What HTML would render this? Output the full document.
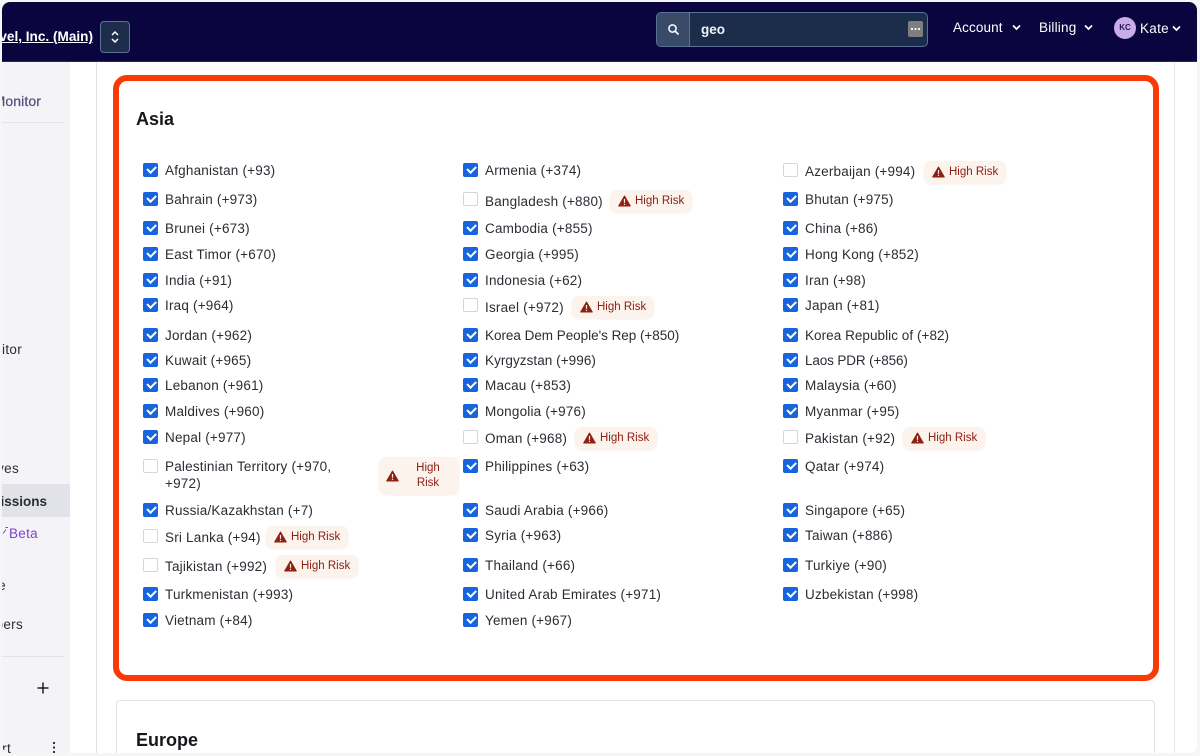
<!DOCTYPE html>
<html lang="en"><head><meta charset="utf-8"><title>Permissions</title>
<style>
html,body{margin:0;padding:0;width:1200px;height:756px;overflow:hidden;background:#f6f6f6;font-family:"Liberation Sans",sans-serif}
#w{position:absolute;left:2px;top:2px;width:1195px;height:751px;background:#fff;border-radius:8px;overflow:hidden}
#p{position:absolute;left:-2px;top:-2px;width:1200px;height:756px}
#p>*{position:absolute}
.t{font-size:13.5px;line-height:18px;letter-spacing:.2px;color:#2c2c34;white-space:nowrap;margin-top:1px}
.c,.u{width:14.5px;height:14.5px;box-sizing:border-box;border-radius:2px;background:#1764dc;margin-top:.7px}
.c::after{content:"";position:absolute;left:3.5px;top:3px;width:6.5px;height:3.5px;border-left:2px solid #fff;border-bottom:2px solid #fff;transform:rotate(-45deg)}
.u{background:#fff;border:1px solid #d6d6da}
.b{width:82px;height:22px;background:#fdf3ed;border-radius:7px;box-shadow:0 1px 2px #f6ece6;color:#8e2014;font-size:11.5px;line-height:22px;letter-spacing:0;white-space:nowrap}
.b svg{position:absolute;left:8px;top:5px}
.b span{position:absolute;left:25px;top:0}
.s{font-size:13.5px;line-height:18px;letter-spacing:.3px;white-space:nowrap;text-align:right;color:#2c2c34}
</style></head><body>
<svg width="0" height="0" style="position:absolute"><defs><g id="w1"><path d="M6.500 1L12.300 11H.7z" fill="#8e2014" stroke="#8e2014" stroke-linejoin="round"/><path d="M6.500 4v3.800M6.500 8.800v1.200" stroke="#fdf3ed" stroke-width="1.200"/></g></defs></svg>
<div id="w"><div id="p">
<div style="left:2px;top:62px;width:68px;height:694px;background:#f4f4f8"></div>
<div style="left:96px;top:62px;width:1px;height:694px;background:#e2e2e5"></div>
<div style="left:1174px;top:62px;width:1px;height:694px;background:#e6e6e8"></div>
<div style="left:2px;top:122px;width:62px;height:1px;background:#e2e2e7"></div>
<div style="left:2px;top:656px;width:62px;height:1px;background:#e2e2e7"></div>
<div style="left:2px;top:484px;width:68px;height:33px;background:#e2e3e8"></div>
<div class="s" style="left:0;top:92px;width:41px;overflow:hidden;color:#52527a;direction:rtl;font-size:14px;letter-spacing:.1px;-webkit-text-stroke:.25px #52527a"><bdi>Monitor</bdi></div>
<div class="s" style="left:0;top:341px;width:22px;overflow:hidden;direction:rtl"><bdi>Monitor</bdi></div>
<div class="s" style="left:0;top:460px;width:19px;overflow:hidden;direction:rtl"><bdi>Archives</bdi></div>
<div class="s" style="left:0;top:493px;width:47px;overflow:hidden;font-weight:700;direction:rtl;letter-spacing:0"><bdi>Permissions</bdi></div>
<div class="s" style="left:9px;top:525px;color:#7b45c9">Beta</div>
<svg style="left:2px;top:526px" width="7" height="9" viewBox="0 0 7 9"><path d="M1 7.500L4 3.500M3.500 1.500L6 1.500" stroke="#7b45c9" stroke-width="1"/></svg>
<div class="s" style="left:0;top:577px;width:6px;overflow:hidden;direction:rtl"><bdi>Usage</bdi></div>
<div class="s" style="left:0;top:616px;width:23px;overflow:hidden;direction:rtl"><bdi>Numbers</bdi></div>
<div class="s" style="left:0;top:740px;width:11px;overflow:hidden;direction:rtl"><bdi>Support</bdi></div>
<svg style="left:37px;top:682px" width="12" height="12" viewBox="0 0 12 12"><path d="M6 .5v11M.5 6h11" stroke="#1e1e28" stroke-width="1.500"/></svg>
<svg style="left:52px;top:741px" width="4" height="14" viewBox="0 0 4 14"><circle cx="2" cy="2" r="1.100" fill="#222"/><circle cx="2" cy="6.500" r="1.100" fill="#222"/><circle cx="2" cy="11" r="1.100" fill="#222"/></svg>

<div style="left:2px;top:2px;width:1196px;height:59px;background:#0b053f;border-bottom:1px solid #2c2c3c"></div>
<div style="left:0;top:28px;width:93px;overflow:hidden;direction:rtl;font-size:13.6px;line-height:18px;font-weight:700;color:#fff;white-space:nowrap"><bdi style="text-decoration:underline">Travel, Inc. (Main)</bdi></div>
<div style="left:100px;top:21px;width:30px;height:32px;box-sizing:border-box;background:#1d2d4b;border:1px solid #5b6f97;border-radius:4px"></div>
<svg style="left:110px;top:30px" width="10" height="14" viewBox="0 0 10 14"><path d="M2 5L5 2 8 5M2 9L5 12 8 9" fill="none" stroke="#fff" stroke-width="1.500"/></svg>
<div style="left:656px;top:12px;width:272px;height:35px;box-sizing:border-box;background:#1c2d4b;border:1px solid #5b6f97;border-radius:5px"></div>
<div style="left:657px;top:13px;width:32px;height:33px;background:#3a4a69;border-right:1px solid #5b6f97;border-radius:4px 0 0 4px"></div>
<svg style="left:667px;top:23px" width="13" height="13" viewBox="0 0 13 13"><circle cx="5.500" cy="5.500" r="3.600" fill="none" stroke="#fff" stroke-width="1.500"/><path d="M8.200 8.200L11.500 11.500" stroke="#fff" stroke-width="1.700"/></svg>
<div style="left:701px;top:21px;font-size:13.500px;line-height:18px;font-weight:700;color:#f2f2f6">geo</div>
<div style="left:908px;top:21px;width:15px;height:16px;background:#7e7e80;border-radius:2px"></div>
<svg style="left:909px;top:27px" width="13" height="4"><circle cx="3" cy="2" r="1.100" fill="#fff"/><circle cx="6.500" cy="2" r="1.100" fill="#fff"/><circle cx="10" cy="2" r="1.100" fill="#fff"/></svg>
<div style="left:953px;top:19px;font-size:13.500px;line-height:18px;color:#fff;letter-spacing:.12px">Account</div>
<div style="left:1039px;top:19px;font-size:13.500px;line-height:18px;color:#fff;letter-spacing:.2px">Billing</div>
<div style="left:1140px;top:20px;font-size:13.500px;line-height:18px;color:#fff;letter-spacing:.3px">Kate</div>
<svg style="left:1012px;top:24px" width="9" height="7"><path d="M1 1.500L4.500 5 8 1.500" fill="none" stroke="#fff" stroke-width="1.700"/></svg>
<svg style="left:1084px;top:24px" width="9" height="7"><path d="M1 1.500L4.500 5 8 1.500" fill="none" stroke="#fff" stroke-width="1.700"/></svg>
<svg style="left:1172px;top:25px" width="9" height="7"><path d="M1 1.500L4.500 5 8 1.500" fill="none" stroke="#fff" stroke-width="1.700"/></svg>
<div style="left:1114px;top:17px;width:22px;height:22px;border-radius:50%;background:#c8ade9;color:#2a1a55;font-size:8px;font-weight:700;line-height:22px;text-align:center">KC</div>

<div style="left:113px;top:75px;width:1046px;height:606px;box-sizing:border-box;border:6px solid #f93a06;border-radius:14px;background:#fff"></div>
<div style="left:116px;top:700px;width:1039px;height:70px;box-sizing:border-box;border:1px solid #e2e2e5;border-radius:4px"></div>
<div style="left:136px;top:107px;font-size:18px;line-height:24px;font-weight:700;color:#17171c">Asia</div>
<div style="left:136px;top:728px;font-size:18px;line-height:24px;font-weight:700;color:#17171c">Europe</div>

<i class="c" style="left:143px;top:162px"></i><span class="t" style="left:165px;top:161px">Afghanistan (+93)</span>
<i class="c" style="left:143px;top:191px"></i><span class="t" style="left:165px;top:190px">Bahrain (+973)</span>
<i class="c" style="left:143px;top:220px"></i><span class="t" style="left:165px;top:219px">Brunei (+673)</span>
<i class="c" style="left:143px;top:246px"></i><span class="t" style="left:165px;top:245px">East Timor (+670)</span>
<i class="c" style="left:143px;top:272px"></i><span class="t" style="left:165px;top:271px">India (+91)</span>
<i class="c" style="left:143px;top:297px"></i><span class="t" style="left:165px;top:296px">Iraq (+964)</span>
<i class="c" style="left:143px;top:327px"></i><span class="t" style="left:165px;top:326px">Jordan (+962)</span>
<i class="c" style="left:143px;top:352px"></i><span class="t" style="left:165px;top:351px">Kuwait (+965)</span>
<i class="c" style="left:143px;top:377px"></i><span class="t" style="left:165px;top:376px">Lebanon (+961)</span>
<i class="c" style="left:143px;top:403px"></i><span class="t" style="left:165px;top:402px">Maldives (+960)</span>
<i class="c" style="left:143px;top:429px"></i><span class="t" style="left:165px;top:428px">Nepal (+977)</span>
<i class="u" style="left:143px;top:458px"></i><span class="t" style="left:165px;top:457px">Palestinian Territory (+970,</span><span class="t" style="left:165px;top:474px">+972)</span>
<i class="c" style="left:143px;top:502px"></i><span class="t" style="left:165px;top:501px">Russia/Kazakhstan (+7)</span>
<i class="u" style="left:143px;top:528px"></i><span class="t" style="left:165px;top:528px">Sri Lanka (+94)</span>
<i class="u" style="left:143px;top:557px"></i><span class="t" style="left:165px;top:557px">Tajikistan (+992)</span>
<i class="c" style="left:143px;top:586px"></i><span class="t" style="left:165px;top:585px">Turkmenistan (+993)</span>
<i class="c" style="left:143px;top:612px"></i><span class="t" style="left:165px;top:611px">Vietnam (+84)</span>

<i class="c" style="left:463px;top:162px"></i><span class="t" style="left:485px;top:161px">Armenia (+374)</span>
<i class="u" style="left:463px;top:191px"></i><span class="t" style="left:485px;top:192px">Bangladesh (+880)</span>
<i class="c" style="left:463px;top:220px"></i><span class="t" style="left:485px;top:219px">Cambodia (+855)</span>
<i class="c" style="left:463px;top:246px"></i><span class="t" style="left:485px;top:245px">Georgia (+995)</span>
<i class="c" style="left:463px;top:272px"></i><span class="t" style="left:485px;top:271px">Indonesia (+62)</span>
<i class="u" style="left:463px;top:297px"></i><span class="t" style="left:485px;top:298px">Israel (+972)</span>
<i class="c" style="left:463px;top:327px"></i><span class="t" style="left:485px;top:326px;letter-spacing:-.03px">Korea Dem People's Rep (+850)</span>
<i class="c" style="left:463px;top:352px"></i><span class="t" style="left:485px;top:351px;letter-spacing:.06px">Kyrgyzstan (+996)</span>
<i class="c" style="left:463px;top:377px"></i><span class="t" style="left:485px;top:376px">Macau (+853)</span>
<i class="c" style="left:463px;top:403px"></i><span class="t" style="left:485px;top:402px">Mongolia (+976)</span>
<i class="u" style="left:463px;top:429px"></i><span class="t" style="left:485px;top:429px">Oman (+968)</span>
<i class="c" style="left:463px;top:458px"></i><span class="t" style="left:485px;top:457px">Philippines (+63)</span>
<i class="c" style="left:463px;top:502px"></i><span class="t" style="left:485px;top:501px">Saudi Arabia (+966)</span>
<i class="c" style="left:463px;top:527px"></i><span class="t" style="left:485px;top:526px">Syria (+963)</span>
<i class="c" style="left:463px;top:557px"></i><span class="t" style="left:485px;top:556px">Thailand (+66)</span>
<i class="c" style="left:463px;top:586px"></i><span class="t" style="left:485px;top:585px">United Arab Emirates (+971)</span>
<i class="c" style="left:463px;top:612px"></i><span class="t" style="left:485px;top:611px">Yemen (+967)</span>

<i class="u" style="left:783px;top:162px"></i><span class="t" style="left:805px;top:162px">Azerbaijan (+994)</span>
<i class="c" style="left:783px;top:191px"></i><span class="t" style="left:805px;top:190px">Bhutan (+975)</span>
<i class="c" style="left:783px;top:220px"></i><span class="t" style="left:805px;top:219px">China (+86)</span>
<i class="c" style="left:783px;top:246px"></i><span class="t" style="left:805px;top:245px">Hong Kong (+852)</span>
<i class="c" style="left:783px;top:272px"></i><span class="t" style="left:805px;top:271px">Iran (+98)</span>
<i class="c" style="left:783px;top:297px"></i><span class="t" style="left:805px;top:296px">Japan (+81)</span>
<i class="c" style="left:783px;top:327px"></i><span class="t" style="left:805px;top:326px;letter-spacing:.05px">Korea Republic of (+82)</span>
<i class="c" style="left:783px;top:352px"></i><span class="t" style="left:805px;top:351px;letter-spacing:-.13px">Laos PDR (+856)</span>
<i class="c" style="left:783px;top:377px"></i><span class="t" style="left:805px;top:376px">Malaysia (+60)</span>
<i class="c" style="left:783px;top:403px"></i><span class="t" style="left:805px;top:402px">Myanmar (+95)</span>
<i class="u" style="left:783px;top:429px"></i><span class="t" style="left:805px;top:429px">Pakistan (+92)</span>
<i class="c" style="left:783px;top:458px"></i><span class="t" style="left:805px;top:457px">Qatar (+974)</span>
<i class="c" style="left:783px;top:502px"></i><span class="t" style="left:805px;top:501px">Singapore (+65)</span>
<i class="c" style="left:783px;top:527px"></i><span class="t" style="left:805px;top:526px">Taiwan (+886)</span>
<i class="c" style="left:783px;top:557px"></i><span class="t" style="left:805px;top:556px">Turkiye (+90)</span>
<i class="c" style="left:783px;top:586px"></i><span class="t" style="left:805px;top:585px">Uzbekistan (+998)</span>

<div class="b" style="left:924px;top:161px"><svg width="13" height="12" viewBox="0 0 13 12"><use href="#w1"/></svg><span>High Risk</span></div>
<div class="b" style="left:610px;top:190px"><svg width="13" height="12" viewBox="0 0 13 12"><use href="#w1"/></svg><span>High Risk</span></div>
<div class="b" style="left:572px;top:296px"><svg width="13" height="12" viewBox="0 0 13 12"><use href="#w1"/></svg><span>High Risk</span></div>
<div class="b" style="left:575px;top:427px"><svg width="13" height="12" viewBox="0 0 13 12"><use href="#w1"/></svg><span>High Risk</span></div>
<div class="b" style="left:903px;top:427px"><svg width="13" height="12" viewBox="0 0 13 12"><use href="#w1"/></svg><span>High Risk</span></div>
<div class="b" style="left:266px;top:526px"><svg width="13" height="12" viewBox="0 0 13 12"><use href="#w1"/></svg><span>High Risk</span></div>
<div class="b" style="left:276px;top:555px"><svg width="13" height="12" viewBox="0 0 13 12"><use href="#w1"/></svg><span>High Risk</span></div>
<div class="b" style="left:379px;top:457px;width:80px;height:37px"><svg style="top:13px;left:7px" width="13" height="12" viewBox="0 0 13 12"><use href="#w1"/></svg><span style="left:36px;top:4px;line-height:15px;width:26px;text-align:center">High<br>Risk</span></div>
</div></div>
</body></html>
